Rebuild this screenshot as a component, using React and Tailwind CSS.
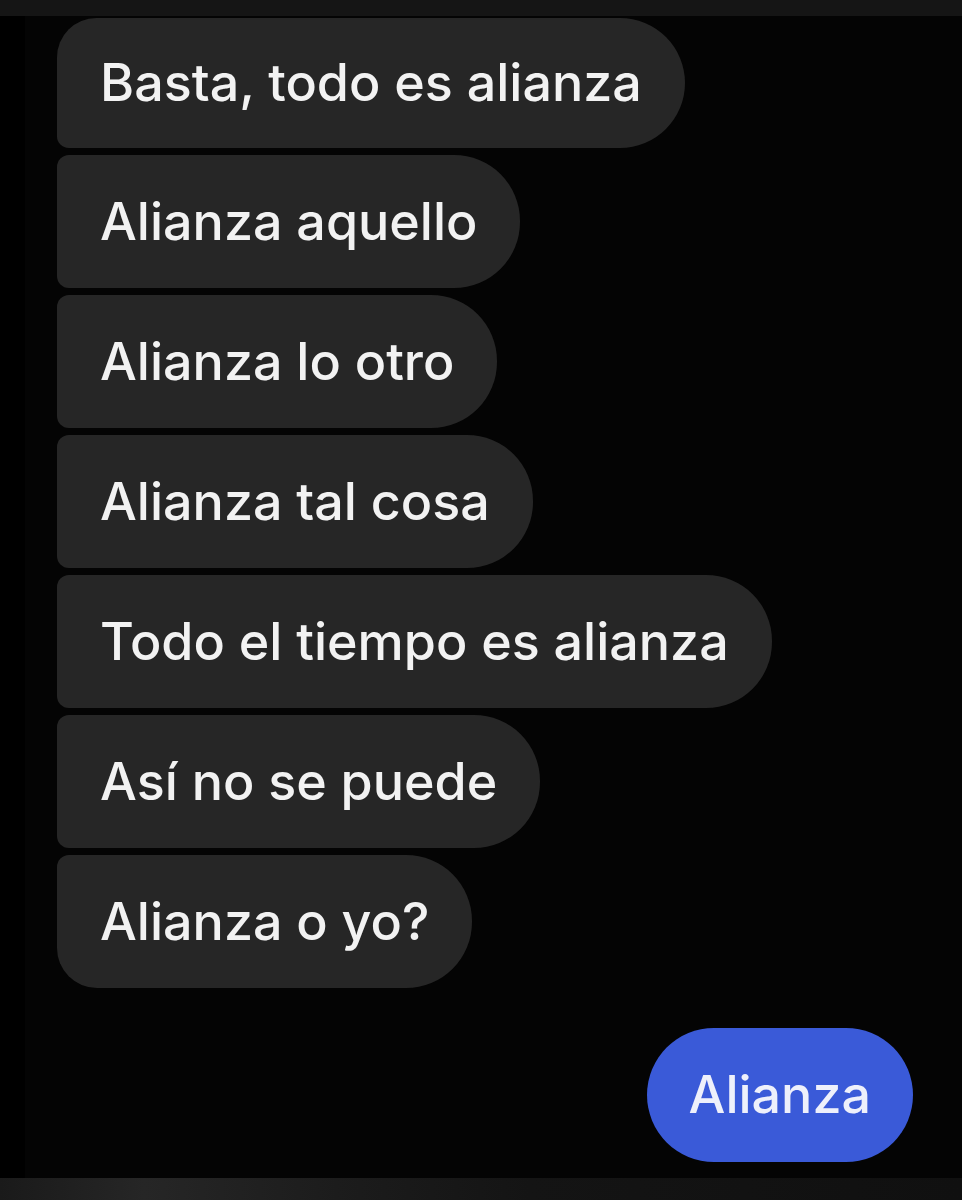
const MESSAGES = [
  'Basta, todo es alianza',
  'Alianza aquello',
  'Alianza lo otro',
  'Alianza tal cosa',
  'Todo el tiempo es alianza',
  'Así no se puede',
  'Alianza o yo?',
]

function Bubble({ text, index, total }) {
  const first = index === 0
  const last = index === total - 1
  const corners = first
    ? 'rounded-tl-[40px] rounded-bl-[12px]'
    : last
      ? 'rounded-tl-[12px] rounded-bl-[40px]'
      : 'rounded-l-[12px]'
  return (
    <div
      className={`flex items-center self-start rounded-r-[66px] bg-[#262626] pl-[43px] pr-[43px] text-[52px] text-[#f2f2f2] ${corners} ${first ? 'h-[130px]' : 'h-[133px]'}`}
    >
      {text}
    </div>
  )
}

export default function App() {
  return (
    <div className="flex h-[1200px] w-[962px] flex-col bg-black font-['Inter','Liberation_Sans',sans-serif] font-medium">
      <div className="h-[16px] bg-[#151515]" />
      <div className="flex flex-1 bg-black">
        <div className="w-[25px] bg-black" />
        <div className="flex flex-1 flex-col bg-[#040404] pl-[32px] pt-[2px]">
          <div className="flex flex-col gap-[7px]">
            {MESSAGES.map((text, i) => (
              <Bubble key={i} text={text} index={i} total={MESSAGES.length} />
            ))}
          </div>
          <div className="mt-[40px] flex justify-end pr-[49px]">
            <div className="flex h-[134px] items-center rounded-full bg-[#3a5ad8] px-[42px] text-[52px] text-[#eef0fb]">
              Alianza
            </div>
          </div>
        </div>
      </div>
      <div className="h-[22px] bg-[linear-gradient(90deg,#1a1a1a_0%,#262626_15%,#1c1c1c_35%,#141414_55%,#101010_100%)]" />
    </div>
  )
}
